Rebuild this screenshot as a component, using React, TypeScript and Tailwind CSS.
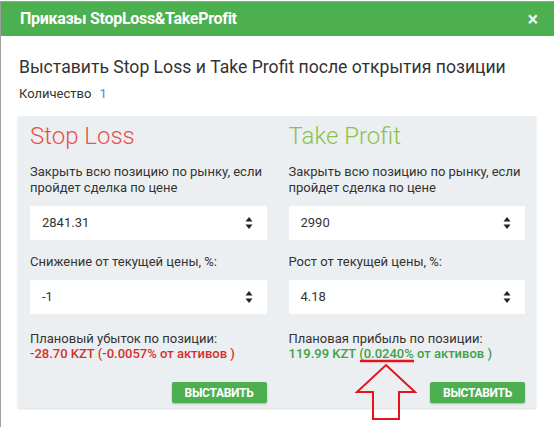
function Spinner() {
  return (
    <svg width="8" height="14" viewBox="0 0 8 14" className="shrink-0">
      <path d="M4 1 L7.5 5.5 L0.5 5.5 Z" fill="#222" />
      <path d="M4 13 L7.5 8.5 L0.5 8.5 Z" fill="#222" />
    </svg>
  );
}

function NumberField({ value }: { value: string }) {
  return (
    <div className="flex h-[34px] items-center justify-between bg-white pl-[12px] pr-[14px] text-[13px] text-[#333]">
      <span>{value}</span>
      <Spinner />
    </div>
  );
}

function Column({
  title,
  titleColor,
  label,
  price,
  pct,
  resultLabel,
  result,
}: {
  title: string;
  titleColor: string;
  label: string;
  price: string;
  pct: string;
  resultLabel: string;
  result: React.ReactNode;
}) {
  return (
    <div className="flex flex-col">
      <div className={`text-[24px] font-light leading-[30px] ${titleColor}`}>{title}</div>
      <div className="mt-[13px] text-[13px] leading-[16px] text-[#333]">
        Закрыть всю позицию по рынку, если пройдет сделка по цене
      </div>
      <div className="mt-[10px]">
        <NumberField value={price} />
      </div>
      <div className="mt-[14px] text-[13px] leading-[16px] text-[#333]">{label}</div>
      <div className="mt-[10px]">
        <NumberField value={pct} />
      </div>
      <div className="mt-[17px] text-[13px] leading-[15px] text-[#333]">{resultLabel}</div>
      {result}
      <div className="mt-[21px] flex justify-end">
        <button className="h-[21px] w-[95px] rounded-[2px] bg-[#4caf50] text-[12px] font-bold tracking-tight text-white shadow-[0_1px_2px_rgba(0,0,0,0.25)]">
          ВЫСТАВИТЬ
        </button>
      </div>
    </div>
  );
}

export default function App() {
  return (
    <div className="relative h-[427px] w-[554px] overflow-hidden bg-white font-['Roboto',sans-serif]">
      <div className="mt-px h-[426px] border-l border-t border-[#9e9e9e]">
        <div className="flex h-[34px] items-center justify-between bg-[#4caf50] pl-[19px] pr-[16px]">
          <span className="text-[16px] font-bold tracking-[-0.3px] text-white">
            Приказы StopLoss&amp;TakeProfit
          </span>
          <span className="text-[20px] font-bold leading-none text-[#e8f5e9]">×</span>
        </div>
        <div className="pl-[18px] pt-[19px]">
          <div className="text-[17.6px] leading-[24px] text-[#333]">
            Выставить Stop Loss и Take Profit после открытия позиции
          </div>
          <div className="mt-[7px] flex gap-[8px] text-[13px] leading-[16px] text-[#333]">
            <span>Количество</span>
            <span className="text-[#3a8fd6]">1</span>
          </div>
        </div>
        <div className="ml-[17px] mt-[14px] grid w-[518px] grid-cols-2 gap-[22px] bg-[#eceff1] pb-[5px] pl-[12px] pr-[11px] pt-[5px] shadow-[0_1px_2px_rgba(0,0,0,0.15)]">
          <Column
            title="Stop Loss"
            titleColor="text-[#e5534b]"
            label="Снижение от текущей цены, %:"
            price="2841.31"
            pct="-1"
            resultLabel="Плановый убыток по позиции:"
            result={
              <div className="text-[13px] font-medium leading-[15px] text-[#d32f2f]">
                -28.70 KZT (-0.0057% от активов )
              </div>
            }
          />
          <Column
            title="Take Profit"
            titleColor="text-[#8bc34a]"
            label="Рост от текущей цены, %:"
            price="2990"
            pct="4.18"
            resultLabel="Плановая прибыль по позиции:"
            result={
              <div className="text-[13px] font-medium leading-[15px] text-[#43a047]">
                119.99 KZT (0.0240% от активов )
              </div>
            }
          />
        </div>
      </div>
      <svg
        className="pointer-events-none absolute left-0 top-0"
        width="554"
        height="427"
        viewBox="0 0 554 427"
      >
        <line x1="360" y1="361" x2="414" y2="361" stroke="#e8141c" strokeWidth="2.5" />
        <path
          d="M386 365 L415 392 L399 392 L399 419 L373 419 L373 392 L357 392 Z"
          fill="none"
          stroke="#e8141c"
          strokeWidth="2"
        />
      </svg>
    </div>
  );
}
